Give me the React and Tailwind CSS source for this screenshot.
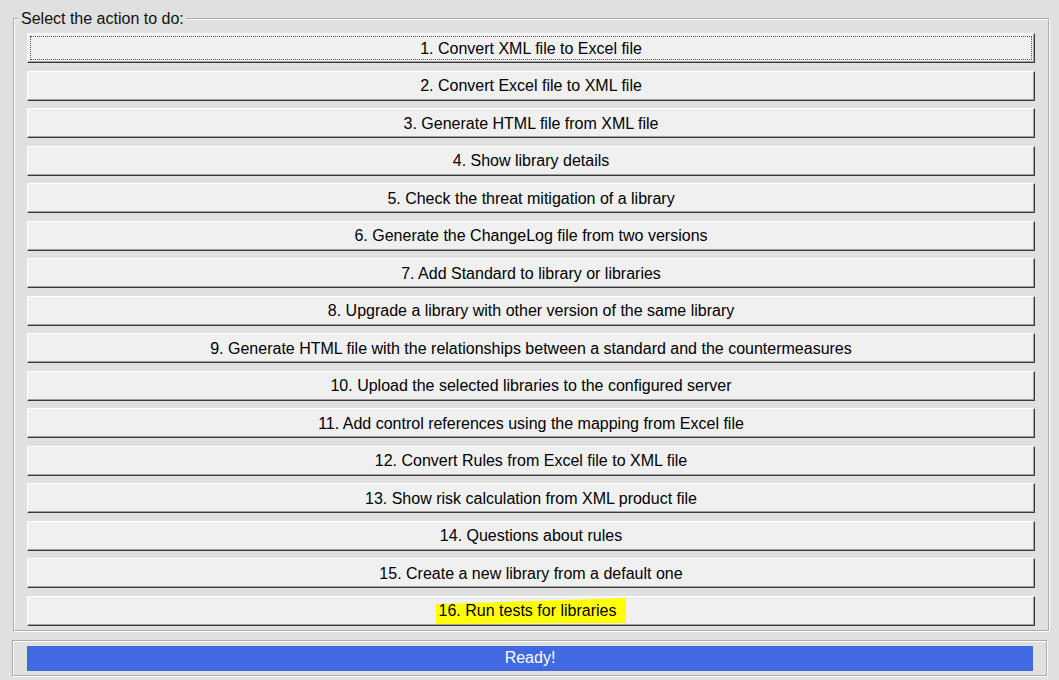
import React from 'react';

const actions = [
  '1. Convert XML file to Excel file',
  '2. Convert Excel file to XML file',
  '3. Generate HTML file from XML file',
  '4. Show library details',
  '5. Check the threat mitigation of a library',
  '6. Generate the ChangeLog file from two versions',
  '7. Add Standard to library or libraries',
  '8. Upgrade a library with other version of the same library',
  '9. Generate HTML file with the relationships between a standard and the countermeasures',
  '10. Upload the selected libraries to the configured server',
  '11. Add control references using the mapping from Excel file',
  '12. Convert Rules from Excel file to XML file',
  '13. Show risk calculation from XML product file',
  '14. Questions about rules',
  '15. Create a new library from a default one',
  '16. Run tests for libraries',
];

function ActionButton({ label, index }) {
  const focused = index === 0;
  const highlighted = index === actions.length - 1;
  return (
    <button
      className={
        'h-[30px] w-full flex items-center justify-center pt-[1px] bg-[#f0f0f0] text-black text-[16px] border-t border-l border-t-white border-l-white border-r border-b border-r-[#3a3a3a] border-b-[#3a3a3a] shadow-[inset_-1px_-1px_0_#a0a0a0] ' +
        (focused ? '[outline:1px_dotted_#505050] [outline-offset:-4px]' : '')
      }
    >
      {highlighted ? (
        <span className="bg-[#ffff00] leading-[26px] pl-[3px] pr-[10px] [clip-path:polygon(0_6px,100%_0,100%_calc(100%-1px),0_100%)]">
          {label}
        </span>
      ) : (
        <span className="leading-[18px]">{label}</span>
      )}
    </button>
  );
}

export default function App() {
  return (
    <div
      className="w-[1059px] h-[680px] bg-[#e0e0e0] overflow-hidden pt-[10px]"
      style={{ fontFamily: '"Liberation Sans", Arial, sans-serif' }}
    >
      <fieldset className="ml-[13px] w-[1037px] border-2 border-white [border-style:groove]">
        <legend className="ml-[4px] px-[2px] text-[16px] leading-[18px] text-[#111]">
          Select the action to do:
        </legend>
        <div className="flex flex-col gap-[7.5px] pl-[12px] pr-[13px] pt-[5px] pb-[4px]">
          {actions.map((a, i) => (
            <ActionButton key={a} label={a} index={i} />
          ))}
        </div>
      </fieldset>

      <div className="mt-[8px] ml-[12px] w-[1036px] border-2 border-white [border-style:groove] px-[13px] py-[4px]">
        <div className="h-[25px] bg-[#4169e1] flex items-center justify-center text-white text-[16px]">
          Ready!
        </div>
      </div>
    </div>
  );
}
